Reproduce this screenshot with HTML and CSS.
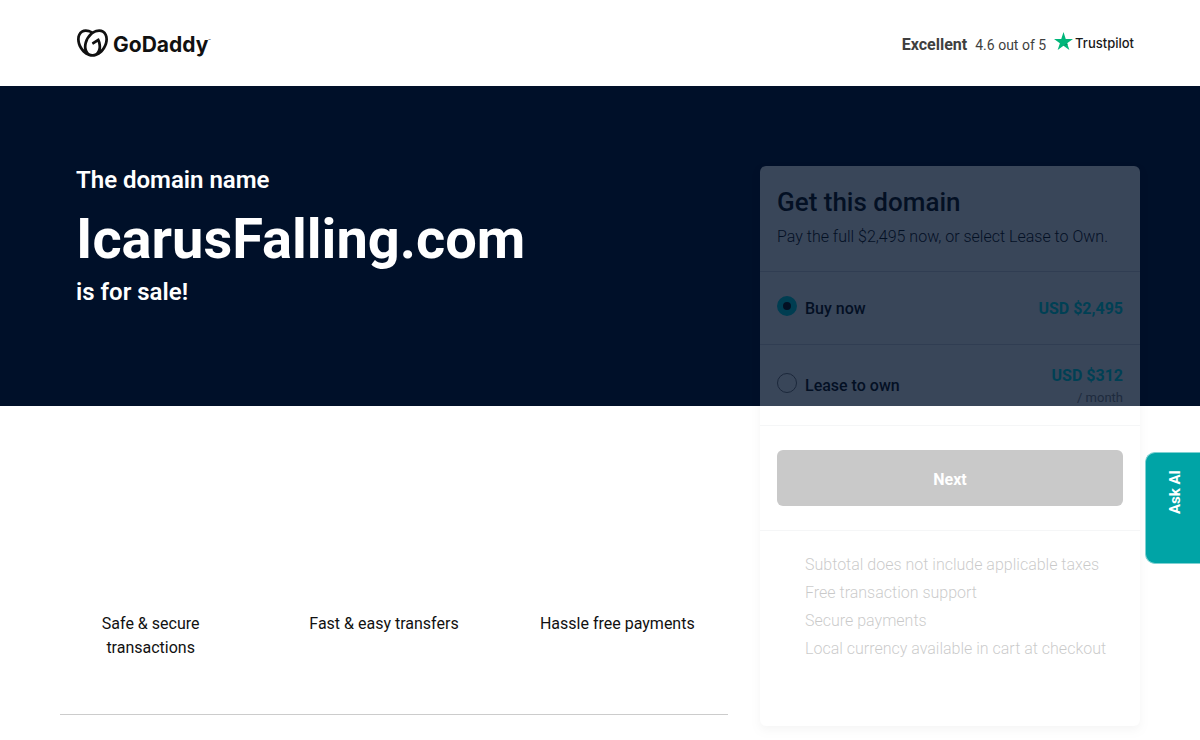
FILE: index.html
```html
<!DOCTYPE html>
<html lang="en">
<head>
<meta charset="utf-8">
<meta name="viewport" content="width=device-width, initial-scale=1">
<title>IcarusFalling.com is for sale</title>
<link rel="stylesheet" href="styles.css">
</head>
<body>
<header class="topbar">
  <a class="brand" href="#" aria-label="GoDaddy">
    <svg class="brand-mark" viewBox="0 1.3 24 21.5" aria-hidden="true"><path fill="currentColor" d="M20.702 2.29c-2.494-1.554-5.778-1.187-8.706.654C9.076 1.104 5.79.736 3.3 2.29c-3.941 2.463-4.42 8.806-1.07 14.167 2.47 3.954 6.333 6.269 9.77 6.226 3.439.043 7.301-2.273 9.771-6.226 3.347-5.361 2.872-11.704-1.069-14.167zM4.042 15.328a12.838 12.838 0 01-1.546-3.541 10.12 10.12 0 01-.336-3.338c.15-1.98.956-3.524 2.27-4.345 1.315-.822 3.052-.87 4.903-.137.281.113.556.24.825.382A15.11 15.11 0 007.5 7.54c-2.035 3.255-2.655 6.878-1.945 9.765a13.247 13.247 0 01-1.514-1.98zm17.465-3.541a12.866 12.866 0 01-1.547 3.54 13.25 13.25 0 01-1.513 1.984c.635-2.589.203-5.76-1.353-8.734a.39.39 0 00-.563-.153l-4.852 3.032a.397.397 0 00-.126.546l.712 1.139a.395.395 0 00.547.126l3.145-1.965c.101.306.203.606.28.916.296 1.086.41 2.214.335 3.337-.15 1.982-.956 3.525-2.27 4.347a4.437 4.437 0 01-2.25.65h-.101a4.432 4.432 0 01-2.25-.65c-1.314-.822-2.121-2.365-2.27-4.347-.074-1.123.039-2.251.335-3.337a13.212 13.212 0 014.05-6.482 10.148 10.148 0 012.849-1.765c1.845-.733 3.586-.685 4.9.137 1.316.822 2.122 2.365 2.271 4.345a10.146 10.146 0 01-.33 3.334z"/></svg>
    <span class="brand-name">GoDaddy<span class="brand-tm">™</span></span>
  </a>
  <a class="rating" href="#">
    <span class="rating-word">Excellent</span>
    <span class="rating-score">4.6 out of 5</span>
    <span class="trust">
      <svg class="trust-star" viewBox="0 0 20 19" aria-hidden="true"><path fill="#00b67a" d="M10 0l2.36 7.26H20l-6.18 4.49L16.18 19 10 14.52 3.82 19l2.36-7.25L0 7.26h7.64z"/><path fill="#00905f" d="M14.35 13.38l-.53-1.63L10 14.52z"/></svg>
      <span class="trust-name">Trustpilot</span>
    </span>
  </a>
</header>

<main class="page">
  <div class="band"></div>
  <h1 class="headline">
    <span class="headline-small">The domain name</span>
    <span class="headline-domain">IcarusFalling.com</span>
    <span class="headline-small">is for sale!</span>
  </h1>

  <form class="card">
    <div class="card-head">
      <h2 class="card-title">Get this domain</h2>
      <p class="card-text">Pay the full $2,495 now, or select Lease to Own.</p>
    </div>
    <label class="option">
      <input class="option-radio" type="radio" name="plan" value="buy" checked>
      <span class="option-name">Buy now</span>
      <span class="option-price">USD $2,495</span>
    </label>
    <label class="option option-lease">
      <input class="option-radio" type="radio" name="plan" value="lease">
      <span class="option-name">Lease to own</span>
      <span class="option-price">USD $312<small class="option-term">/ month</small></span>
    </label>
    <div class="card-action">
      <button class="next" type="button">Next</button>
    </div>
    <ul class="notes">
      <li>Subtotal does not include applicable taxes</li>
      <li>Free transaction support</li>
      <li>Secure payments</li>
      <li>Local currency available in cart at checkout</li>
    </ul>
  </form>

  <section class="benefits">
    <ul class="benefit-list">
      <li>Safe &amp; secure transactions</li>
      <li>Fast &amp; easy transfers</li>
      <li>Hassle free payments</li>
    </ul>
  </section>
</main>

<button class="ask" type="button">Ask AI</button>
</body>
</html>
```
FILE: styles.css
```css
* {
  box-sizing: border-box;
}

body {
  margin: 0;
  background: #fff;
  color: #111;
  font-family: Roboto, "Liberation Sans", sans-serif;
  font-size: 16px;
  line-height: 24px;
}

h1, h2, p, ul {
  margin: 0;
  padding: 0;
}

ul {
  list-style: none;
}

.topbar {
  display: flex;
  align-items: center;
  justify-content: space-between;
  max-width: 1080px;
  height: 86px;
  margin: 0 auto;
  padding: 0 6px 0 17px;
}

.brand {
  display: flex;
  align-items: center;
  gap: 5px;
  color: #111;
  text-decoration: none;
}

.brand-mark {
  width: 31px;
  height: 28px;
}

.brand-name {
  font-family: Inter, sans-serif;
  font-size: 21px;
  font-weight: 700;
}

.brand-tm {
  font-size: 4px;
  font-weight: 400;
  vertical-align: 10px;
}

.rating {
  display: flex;
  align-items: center;
  gap: 8px;
  padding-top: 4px;
  color: #3f3f3f;
  text-decoration: none;
}

.rating-word {
  font-weight: 700;
}

.rating-score {
  font-size: 14px;
}

.trust {
  display: flex;
  align-items: center;
  gap: 2px;
  padding-bottom: 4px;
}

.trust-star {
  width: 19px;
  height: 18px;
  margin-bottom: 4px;
}

.trust-name {
  color: #191919;
  font-family: Inter, sans-serif;
  font-size: 13px;
  font-weight: 500;
}

.page {
  display: grid;
  grid-template-columns: minmax(20px, 1fr) minmax(0, 700px) 380px minmax(20px, 1fr);
  grid-template-rows: 320px auto;
}

.band {
  grid-area: 1 / 1 / 2 / -1;
  background: #001029;
}

.headline {
  grid-area: 1 / 2;
  display: flex;
  flex-direction: column;
  padding: 78px 16px 0;
  color: #fff;
  font-weight: 700;
}

.headline-small {
  font-size: 24px;
  font-weight: 600;
  line-height: 32px;
}

.headline-domain {
  padding-top: 6px;
  font-size: 56px;
  line-height: 74px;
}

.card {
  grid-area: 1 / 3 / 3 / 4;
  align-self: start;
  margin-top: 80px;
  border-radius: 6px;
  background: #fff;
  box-shadow: 0 4px 8px rgba(0, 0, 0, .16);
  opacity: .225;
}

.card-head {
  padding: 20px 17px 22px;
}

.card-title {
  font-size: 26px;
  font-weight: 500;
  line-height: 32px;
}

.card-text {
  margin-top: 7px;
  font-weight: 300;
}

.option {
  display: flex;
  align-items: center;
  gap: 8px;
  min-height: 73px;
  padding: 0 17px;
  border-top: 1px solid #d4dbe0;
}

.option-lease {
  min-height: 81px;
}

.option-radio {
  appearance: none;
  width: 20px;
  height: 20px;
  margin: 0 0 4px;
  border: 1px solid #777;
  border-radius: 50%;
}

.option-radio:checked {
  border: 6px solid #00d8dc;
  background: #111;
}

.option-name {
  padding-top: 2px;
  font-weight: 500;
}

.option-price {
  margin-left: auto;
  padding-top: 1px;
  color: #00e4e8;
  font-weight: 700;
  text-align: right;
}

.option-term {
  display: block;
  color: #888;
  font-size: 13px;
  font-weight: 400;
  line-height: 20px;
}

.card-action {
  padding: 24px 17px;
  border-top: 1px solid #d4dbe0;
  border-bottom: 1px solid #d4dbe0;
}

.next {
  display: block;
  width: 100%;
  height: 56px;
  padding: 3px 0 0;
  border: 0;
  border-radius: 6px;
  background: #111;
  color: #fff;
  font: inherit;
  font-weight: 700;
}

.notes {
  padding: 20px 17px 63px 45px;
  font-weight: 300;
  line-height: 28px;
}

.benefits {
  grid-area: 2 / 2;
  margin-right: 32px;
  margin-bottom: 25px;
  padding: 206px 32px 54px 12px;
  border-bottom: 1px solid #ccc;
}

.benefit-list {
  display: grid;
  grid-template-columns: repeat(3, minmax(0, 1fr));
  gap: 76px;
  text-align: center;
}

.ask {
  position: fixed;
  top: 452px;
  right: 0;
  width: 55px;
  height: 112px;
  padding: 0 0 32px 4px;
  border: 1px solid #7fd1d2;
  border-right: 0;
  border-radius: 10px 0 0 10px;
  background: #00a4a6;
  color: #fff;
  font: 700 15px/20px Roboto, sans-serif;
  writing-mode: sideways-lr;
}
```
